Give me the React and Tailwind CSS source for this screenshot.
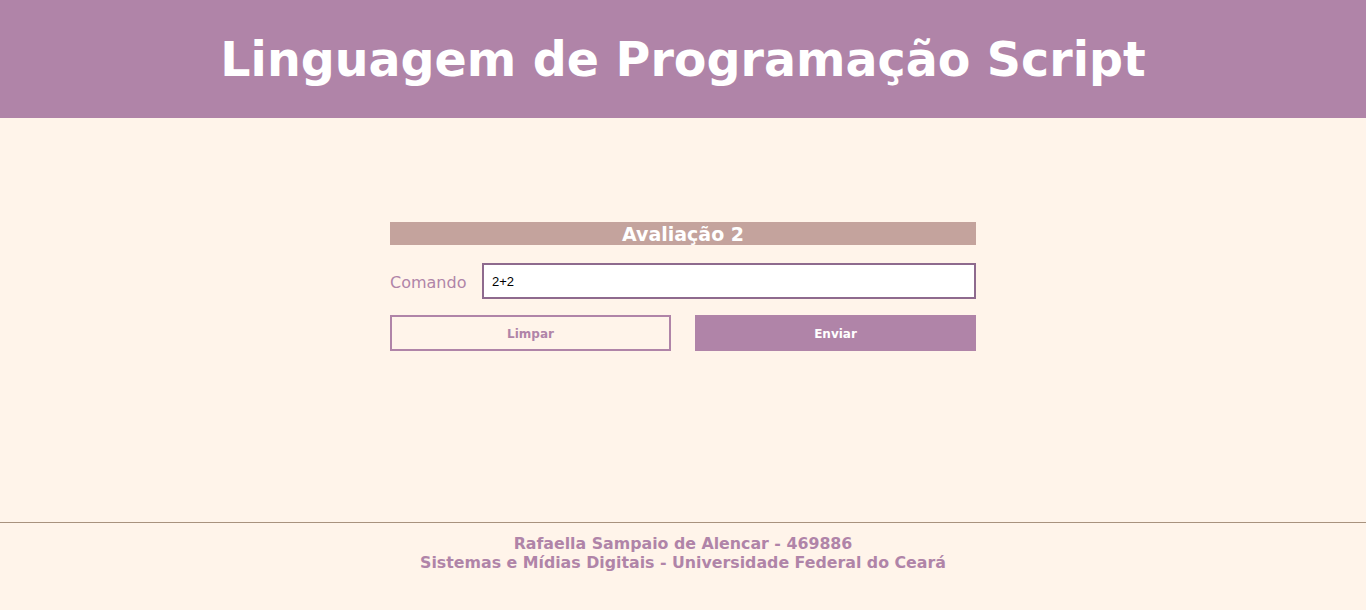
import React, { useState } from "react";

const App = () => {
  const [command, setCommand] = useState("2+2");

  return (
    <div className="min-h-[610px] flex flex-col bg-[#fff4ea] font-['DejaVu_Sans',sans-serif]">
      {/* Header */}
      <header className="h-[118px] bg-[#b084a8] flex items-center justify-center pt-[2px]">
        <h1 className="text-[47.5px] font-bold text-white leading-none">
          Linguagem de Programação Script
        </h1>
      </header>

      {/* Form */}
      <main className="flex-1 flex justify-center pt-[104px]">
        <div className="w-[586px]">
          <h2 className="h-[23px] bg-[#c4a39d] text-white font-bold text-[19px] leading-[24px] text-center">
            Avaliação 2
          </h2>
          <div className="mt-[18px] flex items-center gap-4">
            <label className="w-[76px] pt-[3px] text-[16px] text-[#b084a8]">
              Comando
            </label>
            <input
              type="text"
              value={command}
              onChange={(e) => setCommand(e.target.value)}
              className="flex-1 h-[36px] px-2 border-2 border-[#8e6a8e] bg-white text-[13px] text-black outline-none font-['Liberation_Sans',sans-serif]"
            />
          </div>
          <div className="mt-4 grid grid-cols-2 gap-6">
            <button
              onClick={() => setCommand("")}
              className="h-[36px] pt-[1px] border-2 border-[#b084a8] text-[#b084a8] text-[12px] font-bold"
            >
              Limpar
            </button>
            <button className="h-[36px] pt-[1px] bg-[#b084a8] text-white text-[12px] font-bold">
              Enviar
            </button>
          </div>
        </div>
      </main>

      {/* Footer */}
      <footer className="border-t border-[#a8927e] pt-[11px] pb-[38px] text-center text-[#b084a8] font-bold text-[15.8px] leading-[19px]">
        <p>Rafaella Sampaio de Alencar - 469886</p>
        <p>Sistemas e Mídias Digitais - Universidade Federal do Ceará</p>
      </footer>
    </div>
  );
};

export default App;
